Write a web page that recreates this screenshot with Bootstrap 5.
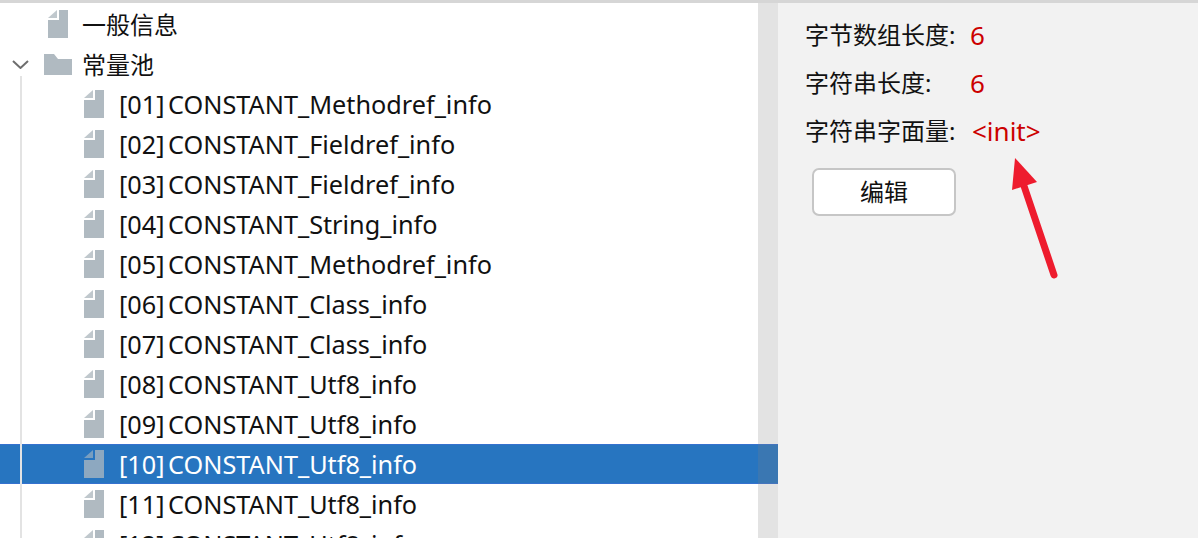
<!DOCTYPE html>
<html lang="zh-CN">
<head>
    <meta charset="UTF-8">
    <title>常量池</title>
    <link href="https://cdn.jsdelivr.net/npm/bootstrap@5.3.0/dist/css/bootstrap.min.css" rel="stylesheet">
    <style>
        html, body {
            height: 538px;
            overflow: hidden;
        }
        body {
            font-family: "Noto Sans", "Noto Sans CJK SC", sans-serif;
            font-size: 24px;
            color: #111;
            background: #fff;
        }
        .app-shell {
            height: 538px;
            border-top: 3px solid #d6d6d6;
        }
        .tree-pane {
            width: 778px;
            padding-top: 1px;
        }
        .tree-row {
            height: 40px;
            white-space: nowrap;
        }
        .tree-row.is-selected {
            background: #2775c0;
            color: #fff;
            box-shadow: inset 0 1px 0 #3571cf, inset 0 -1px 0 #3571cf;
        }
        .tree-row.is-selected .doc-icon {
            opacity: .75;
        }
        .row-label {
            padding-top: 2px;
        }
        .top-level {
            padding-left: 48px;
        }
        .top-level .row-label {
            margin-left: 14px;
        }
        .folder-level {
            padding-left: 12px;
        }
        .folder-level .row-label {
            margin-left: 10px;
        }
        .folder-level .folder-icon {
            margin-left: 15px;
        }
        .child-level {
            padding-left: 84px;
            font-size: 25.25px;
            word-spacing: -3px;
        }
        .child-level .row-label {
            margin-left: 15px;
        }
        .tree-kids {
            position: relative;
        }
        .tree-kids::before {
            content: "";
            position: absolute;
            left: 20px;
            top: -8px;
            bottom: 0;
            width: 2px;
            background: #e3e3e3;
            z-index: 1;
        }
        .tree-scroll {
            position: absolute;
            top: 0;
            bottom: 0;
            right: 0;
            width: 20px;
            background: rgba(128, 128, 128, .22);
            z-index: 2;
        }
        .detail-pane {
            background: #f2f2f2;
            padding: 8px 0 0 27px;
        }
        .detail-row {
            height: 48px;
        }
        .detail-label {
            width: 165px;
        }
        .detail-value {
            color: #cc0000;
            font-size: 26px;
        }
        .detail-value.is-text {
            margin-left: 2px;
        }
        .edit-btn {
            width: 144px;
            height: 48px;
            margin: 13px 0 0 7px;
            padding: 0;
            background: #fff;
            border: 2px solid #c6c6c6;
            border-radius: 7px;
            font-size: 24px;
            color: #111;
        }
        .note-arrow {
            position: absolute;
            left: 230px;
            top: 150px;
        }
    </style>
</head>
<body>
    <div class="app-shell d-flex">
        <div class="tree-pane position-relative flex-shrink-0">
            <div class="tree-row top-level d-flex align-items-center">
                <svg class="doc-icon" width="20" height="28" viewBox="0 0 20 28"><path fill="#b0bac1" d="M11 0H20V28H0V10H11Z"/><path fill="#b0bac1" opacity=".8" d="M9 0V8H0Z"/></svg>
                <span class="row-label">一般信息</span>
            </div>
            <div class="tree-row folder-level d-flex align-items-center">
                <svg width="17" height="9" viewBox="0 0 17 9"><path fill="none" stroke="#6e6e6e" stroke-width="2" d="M1 1L8.500 8L16 1"/></svg>
                <svg class="folder-icon" width="28" height="21" viewBox="0 0 28 21"><path fill="#b0bac1" d="M0 0H10L14 5H28V21H0Z"/></svg>
                <span class="row-label">常量池</span>
            </div>
            <div class="tree-kids" id="kids"></div>
            <div class="tree-scroll"></div>
        </div>
        <div class="detail-pane flex-grow-1 position-relative">
            <div class="detail-row d-flex align-items-center">
                <span class="detail-label">字节数组长度:</span><span class="detail-value">6</span>
            </div>
            <div class="detail-row d-flex align-items-center">
                <span class="detail-label">字符串长度:</span><span class="detail-value">6</span>
            </div>
            <div class="detail-row d-flex align-items-center">
                <span class="detail-label">字符串字面量:</span><span class="detail-value is-text">&lt;init&gt;</span>
            </div>
            <button type="button" class="btn edit-btn d-block">编辑</button>
            <svg class="note-arrow" width="50" height="130" viewBox="0 0 50 130">
                <path fill="none" stroke="#ee1c2e" stroke-width="7" stroke-linecap="round" d="M46 122L15 30"/>
                <path fill="#ee1c2e" d="M7 5L29 29L4 37Z"/>
            </svg>
        </div>
    </div>
    <script>
        // constant pool entries, index 10 is the selected one
        const entries = ['Methodref', 'Fieldref', 'Fieldref', 'String', 'Methodref', 'Class', 'Class', 'Utf8', 'Utf8', 'Utf8', 'Utf8', 'Utf8'];
        const kids = document.getElementById('kids');
        entries.forEach(function (name, i) {
            const num = String(i + 1).padStart(2, '0');
            const row = document.createElement('div');
            row.className = 'tree-row child-level d-flex align-items-center' + (i === 9 ? ' is-selected' : '');
            row.innerHTML = '<svg class="doc-icon" width="20" height="28" viewBox="0 0 20 28"><path fill="#b0bac1" d="M11 0H20V28H0V10H11Z"/><path fill="#b0bac1" opacity=".8" d="M9 0V8H0Z"/></svg>' +
                '<span class="row-label">[' + num + '] CONSTANT_' + name + '_info</span>';
            kids.appendChild(row);
        });
    </script>
    <script src="https://cdn.jsdelivr.net/npm/bootstrap@5.3.0/dist/js/bootstrap.bundle.min.js"></script>
</body>
</html>
